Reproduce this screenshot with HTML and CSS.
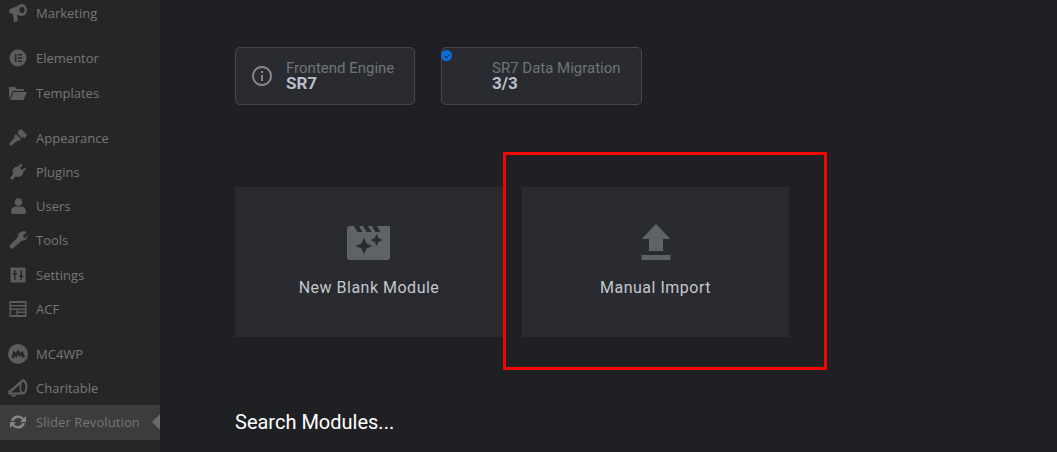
FILE: index.html
```html
<!DOCTYPE html>
<html lang="en">
<head>
    <meta charset="UTF-8">
    <meta name="viewport" content="width=device-width, initial-scale=1.0">
    <title>Slider Revolution</title>
    <link rel="stylesheet" href="styles.css">
</head>
<body>
    <div class="sidebar">
        <ul class="menu">
            <li class="end-group">
                <svg class="icon" viewBox="0 0 20 20"><path d="M1 6.500 14 1v12l-5-1 1 6-4 1.500L5 11l-3-.5z"/><ellipse cx="14" cy="7" rx="5" ry="6"/><ellipse class="hole" cx="14" cy="7" rx="2.500" ry="3"/></svg>
                <span>Marketing</span>
            </li>
            <li>
                <svg class="icon" viewBox="0 0 20 20"><path fill-rule="evenodd" d="M10 1.500a8.500 8.500 0 1 0 0 17 8.500 8.500 0 0 0 0-17zM7 6h1.500v8H7zM10 6h4v1.500h-4zM10 9.200h4v1.500h-4zM10 12.500h4V14h-4z"/></svg>
                <span>Elementor</span>
            </li>
            <li class="end-group">
                <svg class="icon" viewBox="0 0 20 20"><path d="M1 4h6l2 2h7v2H5l-4 8zM5.500 9H19l-3.500 8H2z"/></svg>
                <span>Templates</span>
            </li>
            <li>
                <svg class="icon" viewBox="0 0 20 20"><path d="M10 3l3-2 6 6-2 3-2-1-1 1-4-4zM8 6l5 5-2 2-1.500-.5L3 18l-2-2 5.500-6.500L6 8z"/></svg>
                <span>Appearance</span>
            </li>
            <li>
                <svg class="icon" viewBox="0 0 20 20"><path d="M13 1.500l1.500 1.500-2.500 3 2 2 3-2.500L18 7l-3 3-.5 3-3 2-4-.5L4 18l-2-2 3-3.500L4.500 8 7 5l3-.5z"/></svg>
                <span>Plugins</span>
            </li>
            <li>
                <svg class="icon" viewBox="0 0 20 20"><circle cx="10.500" cy="6" r="3.800"/><path d="M3 16c0-4 3-5.500 4.500-5.500h6C15 10.500 18 12 18 16c0 1-1 2-2 2H5c-1 0-2-1-2-2z"/></svg>
                <span>Users</span>
            </li>
            <li>
                <svg class="icon" viewBox="0 0 20 20"><path d="M14 1.500c2-.5 4 0 4.500 1L15 5.500l.5 2 2 .5 2-3c.5 3-2 6-5.500 5.500L5 18.500c-1 .5-2.500 0-3-1s-.5-2 0-2.500L10 7c-.5-3 1.500-5 4-5.500z"/></svg>
                <span>Tools</span>
            </li>
            <li>
                <svg class="icon" viewBox="0 0 20 20"><path fill-rule="evenodd" d="M2.500 2.500h15v15h-15zM6 5v3H4.500v1.500H6V15h1.500V9.500H9V8H7.500V5zM12.500 5v5.500H11V12h1.500v3H14v-3h1.500v-1.500H14V5z"/></svg>
                <span>Settings</span>
            </li>
            <li class="end-group">
                <svg class="icon" viewBox="0 0 20 20"><path fill-rule="evenodd" d="M1.500 2h17v16h-17zM3 4v2h14V4zM3 7.500v2h14v-2zM3 11v5h5.500v-5zM10 11v1.500h7V11zM10 14v2h7v-2z"/></svg>
                <span>ACF</span>
            </li>
            <li>
                <svg class="icon" viewBox="0 0 20 20"><path fill-rule="evenodd" d="M10 0a10 10 0 1 0 0 20 10 10 0 0 0 0-20zM3.500 13.500 5.500 6.500 8 9l2-3.500L12.500 9l2-2 2.500 6-2.500 1-1-2.500L12 13l-2-2.500L8.500 14l-2-2.500-.5 3z"/></svg>
                <span>MC4WP</span>
            </li>
            <li>
                <svg class="icon" viewBox="0 0 20 20"><path fill-rule="evenodd" d="M0 13.500 14 1.500c3.500-1 5.500 3.500 5.500 7.500s-2 7.500-5 7.500H8.500c0 1.500-1.500 2.500-3 2.500S3 18 3 16.500H.5zM3 14.500h9.500c-1.300-2.500-1.300-5.500-1-7.500zM15 4c-1 0-2 2-2 5s1 5 2 5 2.500-2 2.500-5S16 4 15 4zM4.500 16.500c0 .6.500 1 1 1s1.500-.4 1.500-1z"/></svg>
                <span>Charitable</span>
            </li>
            <li class="current">
                <svg class="icon" viewBox="0 0 20 20"><path d="M3 9c.5-3.500 3.500-5.500 7-5.500 2.300 0 4.300 1 5.500 2.700L18 4v6h-6l2-2.200C13.200 6.700 11.700 6 10 6 8 6 6.500 7.200 6 9z"/><path d="M17 11c-.5 3.500-3.500 5.500-7 5.500-2.300 0-4.300-1-5.500-2.700L2 16v-6h6l-2 2.200C6.800 13.300 8.300 14 10 14c2 0 3.500-1.200 4-3z"/></svg>
                <span>Slider Revolution</span>
            </li>
        </ul>
    </div>

    <div class="content">
        <div class="status-row">
            <div class="status-box engine">
                <svg class="info-icon" viewBox="0 0 24 24"><path d="M11 7h2v2h-2zm0 4h2v6h-2zm1-9C6.480 2 2 6.480 2 12s4.480 10 10 10 10-4.480 10-10S17.520 2 12 2zm0 18c-4.410 0-8-3.590-8-8s3.590-8 8-8 8 3.590 8 8-3.590 8-8 8z"/></svg>
                <div class="status-text">
                    <span class="status-label">Frontend Engine</span>
                    <strong class="status-value">SR7</strong>
                </div>
            </div>
            <div class="status-box migration">
                <span class="check-badge">
                    <svg viewBox="0 0 24 24"><path d="M9 16.200 4.800 12l-1.800 1.800 6 6 12-12L19.200 6z"/></svg>
                </span>
                <div class="status-text">
                    <span class="status-label">SR7 Data Migration</span>
                    <strong class="status-value">3/3</strong>
                </div>
            </div>
        </div>

        <div class="action-row">
            <div class="action-card first">
                <svg class="action-icon" viewBox="0 0 44 38"><path fill-rule="evenodd" d="M3 2h4l3.500 6h5L12 2h4l3.500 6h5L21 2h4l3.500 6h5L30 2h13V33a3 3 0 0 1-3 3H3a3 3 0 0 1-3-3V5a3 3 0 0 1 3-3zM17 13.700l2.600 5.700 5.700 2.600-5.700 2.600-2.600 5.700-2.600-5.700-5.700-2.600 5.700-2.600zM29.700 10l1.900 4.100 4.100 1.900-4.100 1.900-1.900 4.100-1.900-4.100-4.100-1.900 4.100-1.900z"/></svg>
                <span>New Blank Module</span>
            </div>
            <div class="action-card">
                <svg class="action-icon" viewBox="0 0 44 38"><path d="M22 0l14.500 15H29v12H15V15H7.500zM7.500 31h29v5h-29z"/></svg>
                <span>Manual Import</span>
            </div>
        </div>

        <h2 class="search-title">Search Modules...</h2>
    </div>

    <div class="highlight"></div>
</body>
</html>
```

FILE: styles.css
```css
* {
    margin: 0;
    padding: 0;
    box-sizing: border-box;
}
body {
    display: flex;
    width: 1057px;
    height: 452px;
    overflow: hidden;
    background: #1f2023;
    font-family: Roboto, sans-serif;
}
.sidebar {
    width: 160px;
    height: 452px;
    flex-shrink: 0;
    background: #262626;
    font-family: "Open Sans", sans-serif;
}
.menu {
    list-style: none;
    margin-top: -3.75px;
}
.menu li {
    display: flex;
    align-items: center;
    height: 34.3px;
    padding-left: 8px;
    gap: 8px;
    color: #767676;
    font-size: 13px;
}
.menu li.end-group {
    margin-bottom: 10.55px;
}
.menu li:first-child {
    margin-bottom: 10.7px;
}
.menu li.current {
    position: relative;
    background: #3c3c3c;
    letter-spacing: .1px;
}
.menu li.current::after {
    content: "";
    position: absolute;
    right: 0;
    top: 9px;
    border: 8px solid transparent;
    border-left: 0;
    border-right-color: #6a6a6a;
}
.icon {
    width: 20px;
    height: 20px;
    flex-shrink: 0;
    fill: #5c5c5c;
}
.icon .hole {
    fill: #262626;
}
.current .icon {
    fill: #848484;
}
.content {
    flex: 1;
    padding: 47px 0 0 75px;
}
.status-row {
    display: flex;
    gap: 26px;
}
.status-box {
    position: relative;
    display: flex;
    align-items: center;
    height: 58px;
    background: #2a2b30;
    border: 1px solid #47484c;
    border-radius: 5px;
}
.engine {
    width: 180px;
    padding-left: 14px;
    gap: 12px;
}
.migration {
    width: 201px;
    padding-left: 50px;
}
.info-icon {
    width: 24px;
    height: 24px;
    fill: #85878a;
}
.status-text {
    display: flex;
    flex-direction: column;
    padding-bottom: 2px;
}
.status-label {
    color: #6f7479;
    font-size: 15px;
    line-height: 16px;
}
.status-value {
    margin-top: -1px;
    color: #b7bfca;
    font-size: 17px;
    line-height: 16px;
}
.check-badge {
    position: absolute;
    left: -1px;
    top: 2px;
    display: flex;
    align-items: center;
    justify-content: center;
    width: 11px;
    height: 11px;
    border-radius: 50%;
    background: #0a6fdc;
}
.check-badge svg {
    width: 8px;
    height: 8px;
    fill: #1f2023;
}
.action-row {
    display: flex;
    gap: 19px;
    margin-top: 82px;
}
.action-card {
    display: flex;
    flex-direction: column;
    align-items: center;
    width: 267px;
    height: 150px;
    padding-top: 37px;
    background: #2a2b30;
    color: #c3c7cc;
    font-size: 16px;
    letter-spacing: .5px;
}
.action-card.first {
    width: 268px;
}
.action-icon {
    width: 44px;
    height: 38px;
    margin-bottom: 16px;
    fill: #5f6267;
}
.search-title {
    margin-top: 73px;
    color: #fff;
    font-size: 20px;
    font-weight: 400;
    line-height: 24px;
}
.highlight {
    position: absolute;
    left: 503px;
    top: 152px;
    width: 324px;
    height: 218px;
    border: 3px solid #f00;
}
```
